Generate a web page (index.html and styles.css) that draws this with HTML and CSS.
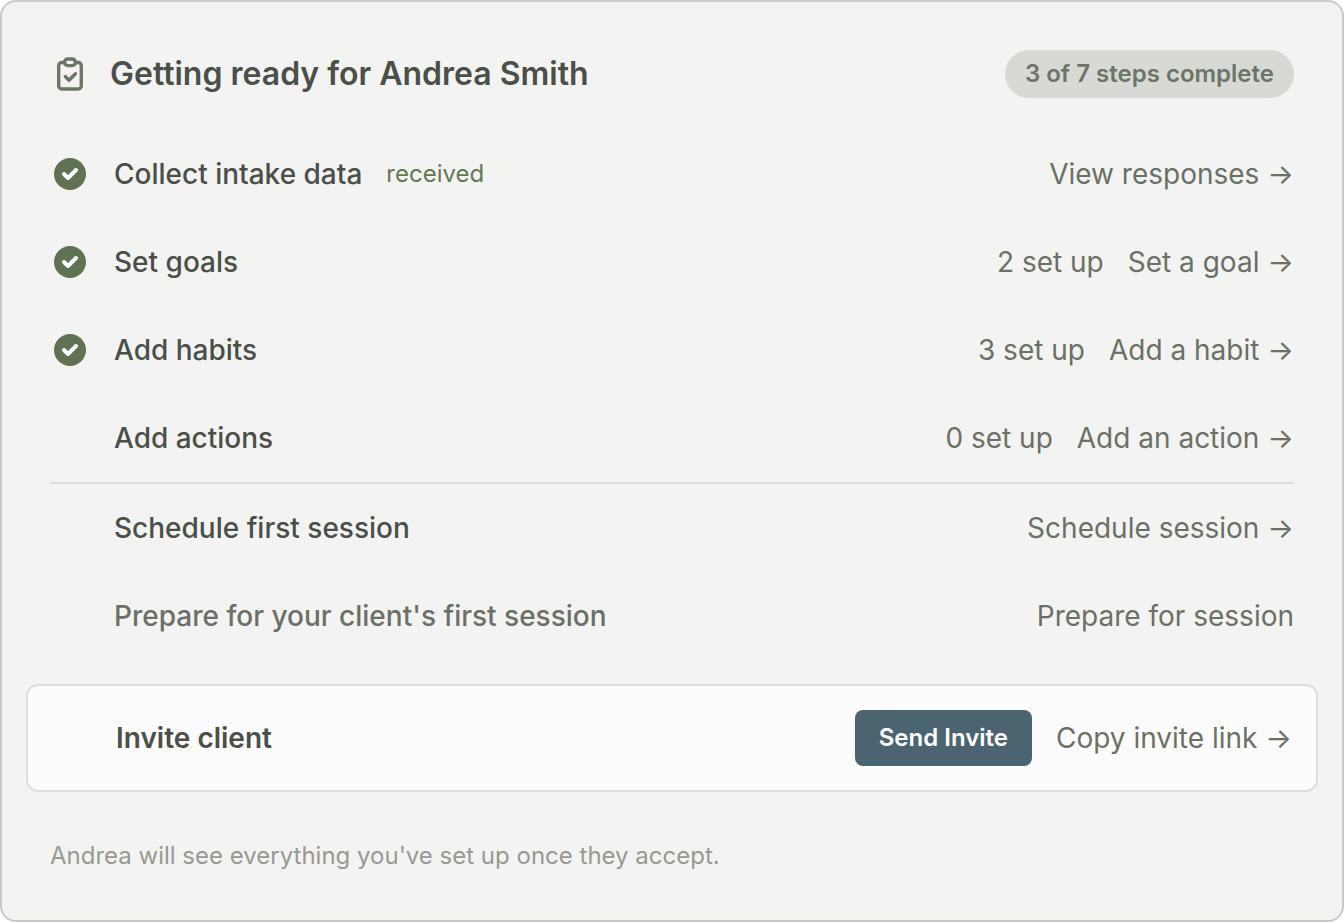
FILE: index.html
```
<!DOCTYPE html>
<html lang="en">
<head>
  <meta charset="UTF-8">
  <meta name="viewport" content="width=device-width, initial-scale=1.0">
  <title>Getting ready for Andrea Smith</title>
  <link rel="stylesheet" href="styles.css">
</head>
<body>
  <!-- shared icons -->
  <svg class="sprite" aria-hidden="true">
    <symbol id="check" viewBox="0 0 32 32">
      <circle cx="16" cy="16" r="16" fill="#5f7350"/>
      <path d="M10 16l4 4 8-8" fill="none" stroke="#fff" stroke-width="4" stroke-linecap="round" stroke-linejoin="round"/>
    </symbol>
  </svg>

  <main class="card">
    <header class="header">
      <span class="icon">
        <svg width="28" height="36" viewBox="0 0 28 36" fill="none" stroke="#6b7665" stroke-width="3.4" stroke-linecap="round" stroke-linejoin="round" aria-hidden="true">
          <path d="M8.5 6.500H5.700a3 3 0 0 0-3 3v20.500a3 3 0 0 0 3 3h16.600a3 3 0 0 0 3-3V9.500a3 3 0 0 0-3-3h-2.800"/>
          <rect x="8.500" y="3" width="11" height="6.600" rx="3.300"/>
          <path d="M9.300 20.500l3.700 3.700 6.500-6.500"/>
        </svg>
      </span>
      <h1>Getting ready for Andrea Smith</h1>
      <span class="pill">3 of 7 steps complete</span>
    </header>

    <ul class="steps">
      <li class="step">
        <span class="icon"><svg class="check" role="img" aria-label="Done"><use href="#check"/></svg></span>
        <span class="name">Collect intake data</span>
        <span class="status">received</span>
        <div class="actions">
          <a href="#">View responses →</a>
        </div>
      </li>
      <li class="step">
        <span class="icon"><svg class="check" role="img" aria-label="Done"><use href="#check"/></svg></span>
        <span class="name">Set goals</span>
        <div class="actions">
          <span>2 set up</span>
          <a href="#">Set a goal →</a>
        </div>
      </li>
      <li class="step">
        <span class="icon"><svg class="check" role="img" aria-label="Done"><use href="#check"/></svg></span>
        <span class="name">Add habits</span>
        <div class="actions">
          <span>3 set up</span>
          <a href="#">Add a habit →</a>
        </div>
      </li>
      <li class="step">
        <span class="icon"></span>
        <span class="name">Add actions</span>
        <div class="actions">
          <span>0 set up</span>
          <a href="#">Add an action →</a>
        </div>
      </li>
      <li class="step divided">
        <span class="icon"></span>
        <span class="name">Schedule first session</span>
        <div class="actions">
          <a href="#">Schedule session →</a>
        </div>
      </li>
      <li class="step upcoming">
        <span class="icon"></span>
        <span class="name">Prepare for your client's first session</span>
        <div class="actions">
          <a href="#">Prepare for session</a>
        </div>
      </li>
      <li class="step invite">
        <span class="icon"></span>
        <span class="name">Invite client</span>
        <div class="actions">
          <button type="button" class="send-btn">Send Invite</button>
          <a href="#">Copy invite link →</a>
        </div>
      </li>
    </ul>

    <p class="note">Andrea will see everything you've set up once they accept.</p>
  </main>
</body>
</html>
```
FILE: styles.css
```
* {
  margin: 0;
  padding: 0;
  box-sizing: border-box;
}

body {
  font-family: Inter, sans-serif;
  font-size: 28px;
  line-height: 40px;
  color: #4a4f48;
  background: #fff;
}

.sprite {
  position: absolute;
  width: 0;
  height: 0;
}

.card {
  padding: 48px;
  background: #f3f4f1;
  border: 2px solid #c8cac6;
  border-radius: 16px;
}

/* Header */
.header {
  display: flex;
  align-items: center;
  gap: 20px;
  margin-bottom: 32px;
}

.header h1 {
  font-size: 32px;
  font-weight: 600;
  line-height: 48px;
}

.icon {
  display: flex;
  flex: none;
  justify-content: center;
  width: 40px;
}

.pill {
  margin-left: auto;
  padding: 0 20px;
  font-size: 24px;
  font-weight: 600;
  line-height: 48px;
  color: #6b7568;
  background: #d7dad4;
  border-radius: 24px;
}

/* Steps */
.steps {
  list-style: none;
}

.step {
  display: flex;
  align-items: center;
  gap: 24px;
  padding: 24px 0;
}

.name {
  font-weight: 500;
}

.status {
  font-size: 24px;
  color: #64784f;
}

.check {
  width: 32px;
  height: 32px;
}

.actions {
  display: flex;
  align-items: center;
  gap: 24px;
  margin-left: auto;
  color: #6b7066;
}

.actions a {
  color: inherit;
  text-decoration: none;
}

.actions a:hover {
  text-decoration: underline;
}

.divided {
  border-top: 2px solid #dddfdb;
}

.upcoming .name {
  color: #6b7066;
}

/* Invite row */
.invite {
  margin: 24px -24px 0;
  padding: 24px;
  background: #fbfcfb;
  border: 2px solid #dddfdb;
  border-radius: 12px;
}

.invite .name {
  font-weight: 600;
}

.send-btn {
  padding: 0 24px;
  font-family: inherit;
  font-size: 24px;
  font-weight: 600;
  line-height: 56px;
  color: #fff;
  background: #4a656f;
  border: none;
  border-radius: 8px;
  cursor: pointer;
}

.note {
  margin-top: 48px;
  font-size: 24px;
  line-height: 32px;
  color: #969a93;
}
```
